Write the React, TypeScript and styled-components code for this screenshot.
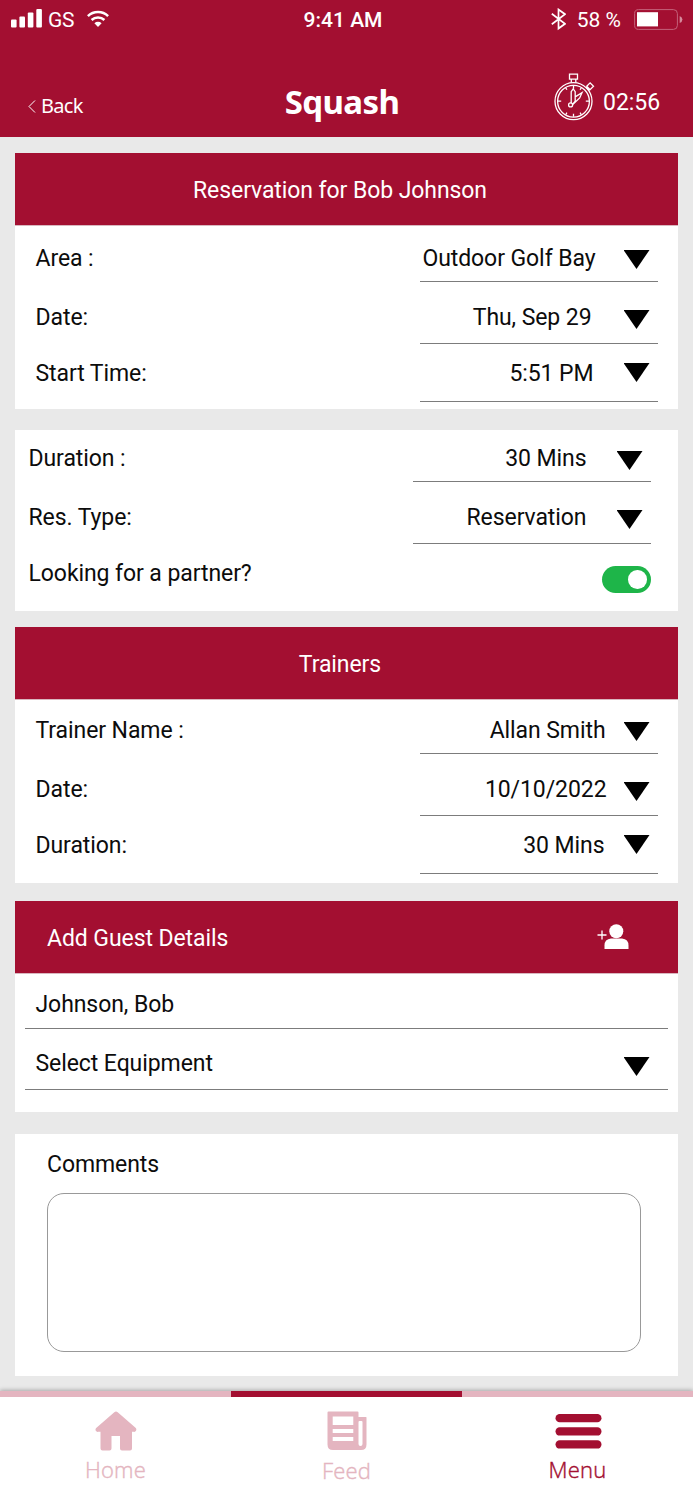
import React from "react";
import styled, { createGlobalStyle } from "styled-components";

const crimson = "#a30f31";
const blush = "#e4b5c0";

const GlobalStyle = createGlobalStyle`
  * { box-sizing: border-box; }
  body { margin: 0; background: #e9e9e9; }
`;

const Screen = styled.div`
  width: 693px;
  height: 1500px;
  display: flex;
  flex-direction: column;
  background: #e9e9e9;
  color: #0c0c0c;
  font-family: Roboto, "Liberation Sans", sans-serif;
  font-size: 23px;
  letter-spacing: -0.08px;
  line-height: 28px;
  white-space: nowrap;
  overflow: hidden;
`;

const Header = styled.header`
  height: 137px;
  flex: none;
  background: ${crimson};
  color: #fff;
`;

const StatusBar = styled.div`
  height: 40px;
  display: grid;
  grid-template-columns: 1fr auto 1fr;
  align-items: center;
  padding: 0 10px 1px 11px;
  font-size: 20px;
  svg { display: block; flex: none; }
`;

const StatusGroup = styled.div<{ $end?: boolean }>`
  display: flex;
  align-items: center;
  justify-content: ${(p) => (p.$end ? "flex-end" : "flex-start")};
`;

const Clock = styled.span`
  margin-right: 8px;
  font-weight: 500;
  font-size: 21px;
  letter-spacing: 0;
`;

const Carrier = styled.span`
  margin: 0 13px 0 6px;
  font-size: 21px;
  letter-spacing: -0.3px;
`;

const Percent = styled.span`
  margin: 0 13px 0 11px;
  font-size: 21px;
  letter-spacing: 0;
`;

const TitleBar = styled.div`
  height: 97px;
  display: grid;
  grid-template-columns: 1fr auto 1fr;
  align-items: start;
  padding: 32px 33px 0 28px;
`;

const BackButton = styled.div`
  display: flex;
  align-items: center;
  gap: 5px;
  padding-top: 20px;
  font: 20px/28px "Noto Sans", "Open Sans", sans-serif;
  letter-spacing: -0.7px;
`;

const Title = styled.h1`
  margin: 0 4px 0 0;
  padding-top: 8px;
  font: 700 33px/44px "Noto Sans", "Open Sans", sans-serif;
  letter-spacing: -0.6px;
`;

const Timer = styled.div`
  display: flex;
  justify-content: flex-end;
  gap: 8px;
  line-height: 62px;
`;

const Content = styled.main`
  flex: 1;
  padding: 16px 15px 0;
`;

const Card = styled.section<{ $height: number; $gap: number; $inset: number }>`
  height: ${(p) => p.$height}px;
  margin-bottom: ${(p) => p.$gap}px;
  background: #fff;
  --inset: ${(p) => p.$inset}px;
`;

const CardHeader = styled.div<{ $split?: boolean }>`
  height: 73px;
  display: flex;
  align-items: center;
  justify-content: ${(p) => (p.$split ? "space-between" : "center")};
  padding: ${(p) => (p.$split ? "3px 49px 0 32px" : "4px 13px 0 0")};
  background: ${crimson};
  color: #fff;
  border-bottom: 1px solid #d9b7bf;
`;

const Row = styled.div<{ $height: number; $top: number }>`
  height: ${(p) => p.$height}px;
  display: flex;
  justify-content: space-between;
  padding: 0 calc(41px - var(--inset)) 0 calc(var(--inset) - 0.5px);
  > span { padding-top: ${(p) => p.$top}px; }
`;

const Field = styled.div<{ $top: number; $end: number }>`
  width: 238px;
  flex: none;
  display: flex;
  justify-content: flex-end;
  padding-right: 8.5px;
  border-bottom: 1.4px solid #7c7c7c;
  > span { padding-top: ${(p) => p.$top}px; margin-right: ${(p) => p.$end}px; }
`;

const Arrow = styled.i<{ $top: number }>`
  flex: none;
  width: 26px;
  height: 19px;
  margin-top: ${(p) => p.$top}px;
  background: #000;
  clip-path: polygon(0 0, 100% 0, 50% 100%);
`;

const Switch = styled.div`
  width: 49px;
  height: 27px;
  margin-top: 22px;
  padding: 4px 4.5px;
  display: flex;
  justify-content: flex-end;
  border-radius: 14px;
  background: #1eb549;
  &::after { content: ""; width: 18.5px; height: 18.5px; border-radius: 50%; background: #fff; }
`;

const LineRow = styled.div<{ $height: number; $top: number }>`
  height: ${(p) => p.$height}px;
  margin: 0 10px;
  padding: 0 18.5px 0 10.5px;
  display: flex;
  justify-content: space-between;
  border-bottom: 1.4px solid #7c7c7c;
  > span { padding-top: ${(p) => p.$top}px; }
`;

const Comments = styled.div`
  padding: 17px 37px 0 32px;
`;

const CommentBox = styled.div`
  height: 159px;
  margin-top: 14px;
  border: 1px solid #999;
  border-radius: 17px;
`;

const TabBar = styled.nav`
  height: 109px;
  flex: none;
  display: grid;
  grid-template-columns: repeat(3, 1fr);
  background: #fff;
  box-shadow: 0 -1px 4px rgba(0, 0, 0, 0.28);
`;

const Tab = styled.div<{ $current?: boolean; $marked?: boolean; $drop?: number }>`
  display: flex;
  flex-direction: column;
  align-items: center;
  border-top: 6px solid ${(p) => (p.$marked ? crimson : blush)};
  color: ${(p) => (p.$current ? crimson : blush)};
  font: 300 22px/30px "Open Sans", "Noto Sans", sans-serif;
  letter-spacing: 0.2px;
  -webkit-text-stroke: 0.4px currentColor;
  svg { display: block; margin: 14px 0 0 1px; }
  span { margin-top: ${(p) => 2 + (p.$drop ?? 0)}px; }
`;

interface SelectRowProps {
  label: string;
  value: string;
  height: number;
  top: number;
  arrow: number;
  end: number;
}

const SelectRow = ({ label, value, height, top, arrow, end }: SelectRowProps) => (
  <Row $height={height} $top={top}>
    <span>{label}</span>
    <Field $top={top} $end={end}>
      <span>{value}</span>
      <Arrow $top={arrow} />
    </Field>
  </Row>
);

const Stopwatch = () => (
  <svg width="41" height="50" viewBox="0 -0.2 41 50" fill="none" stroke="#fff" strokeWidth="1.3">
    <circle cx="19.500" cy="29" r="18.500" />
    <circle cx="19.500" cy="29" r="15.900" />
    <path d="M15.500 2h8v5h-8zM17.300 7v3.600M21.800 7v3.600" />
    <path d="M32.700 14.100l3.400-3.400 3.400 3.400-3.400 3.400zM32 15l3.400 3.400" />
    <path d="M19.500 13.500v3M19.500 41.500v3M4 29h3.200M31.800 29H35M11.700 15.500l1.200 2.100M27.300 15.500l-1.200 2.100M11.700 42.500l1.200-2.100M27.300 42.500l-1.200-2.100" />
    <path d="M17.200 31.300V19.500l2-2.800 2 2.800v9.500l-2.700 3.300M21.200 24.700l6.800-4.200-2.300 5.200-7 6.500" />
    <circle cx="16.600" cy="32.700" r="2" />
  </svg>
);

export default function App() {
  return (
    <>
      <GlobalStyle />
      <Screen>
        <Header>
          <StatusBar>
            <StatusGroup>
              <svg width="31" height="21" fill="#fff">
                <rect x="0" y="10.500" width="5.600" height="8" rx="1" />
                <rect x="8.400" y="7.500" width="5.600" height="11" rx="1" />
                <rect x="16.800" y="3.500" width="5.600" height="15" rx="1" />
                <rect x="25.300" y="0" width="5.600" height="18.500" rx="1" />
              </svg>
              <Carrier>GS</Carrier>
              <svg width="22" height="19" viewBox="0 0 22 19" fill="none" stroke="#fff" strokeWidth="2.500">
                <path d="M0.900 6.200a14.400 14.400 0 0 1 20.200 0M4.600 10a9.200 9.200 0 0 1 12.800 0" />
                <path d="M7.400 13.200a5.100 5.100 0 0 1 7.200 0L11 17z" fill="#fff" stroke="none" />
              </svg>
            </StatusGroup>
            <Clock>9:41 AM</Clock>
            <StatusGroup $end>
              <svg width="15" height="23" viewBox="0 0 15 23" fill="none" stroke="#fff" strokeWidth="1.700">
                <path d="M0.800 5.800L14 15.800 7.500 20.500v-19L14 6.200 0.800 16.200" />
              </svg>
              <Percent>58 %</Percent>
              <svg width="49" height="21" viewBox="0 0 49 21">
                <rect x="0.600" y="0.600" width="42.800" height="19.800" rx="4" fill="none" stroke="#c4627a" />
                <rect x="3" y="3.200" width="21" height="14.200" fill="#fff" />
                <path d="M45.700 7v7q2.700-1 2.700-3.500T45.700 7z" fill="#d58b9c" />
              </svg>
            </StatusGroup>
          </StatusBar>
          <TitleBar>
            <BackButton>
              <svg width="8" height="13" viewBox="0 0 8 13" fill="none" stroke="#fff">
                <path d="M7 0.500l-6 6 6 6" />
              </svg>
              Back
            </BackButton>
            <Title>Squash</Title>
            <Timer>
              <Stopwatch />
              <span>02:56</span>
            </Timer>
          </TitleBar>
        </Header>
        <Content>
          <Card $height={256} $gap={21} $inset={21}>
            <CardHeader>Reservation for Bob Johnson</CardHeader>
            <SelectRow label="Area :" value="Outdoor Golf Bay" height={56} top={19} arrow={24} end={28} />
            <SelectRow label="Date:" value="Thu, Sep 29" height={62} top={22} arrow={28} end={32} />
            <SelectRow label="Start Time:" value="5:51 PM" height={58} top={16} arrow={19} end={30} />
          </Card>
          <Card $height={181} $gap={16} $inset={14}>
            <SelectRow label="Duration :" value="30 Mins" height={52} top={15} arrow={21} end={30} />
            <SelectRow label="Res. Type:" value="Reservation" height={62} top={22} arrow={28} end={30} />
            <Row $height={66} $top={16}>
              <span>Looking for a partner?</span>
              <Switch />
            </Row>
          </Card>
          <Card $height={256} $gap={18} $inset={21}>
            <CardHeader>Trainers</CardHeader>
            <SelectRow label="Trainer Name :" value="Allan Smith" height={54} top={17} arrow={22} end={18} />
            <SelectRow label="Date:" value="10/10/2022" height={62} top={22} arrow={28} end={17} />
            <SelectRow label="Duration:" value="30 Mins" height={58} top={16} arrow={19} end={19} />
          </Card>
          <Card $height={211} $gap={22} $inset={21}>
            <CardHeader $split>
              Add Guest Details
              <svg width="32" height="29" viewBox="0 0 32 29" fill="#fff">
                <path d="M0.500 11h9M5 6.500v9" stroke="#fff" strokeWidth="1.300" />
                <circle cx="19.300" cy="7.300" r="7" />
                <path d="M7.500 25v-3.500q0-6.500 6.500-7h11q6.500.5 6.500 7V25z" />
              </svg>
            </CardHeader>
            <LineRow $height={55} $top={17}>
              <span>Johnson, Bob</span>
            </LineRow>
            <LineRow $height={61} $top={21}>
              <span>Select Equipment</span>
              <Arrow $top={28} />
            </LineRow>
          </Card>
          <Card $height={242} $gap={0} $inset={32}>
            <Comments>
              Comments
              <CommentBox />
            </Comments>
          </Card>
        </Content>
        <TabBar>
          <Tab>
            <svg width="42" height="41" viewBox="0 0 42 41" fill={blush}>
              <path d="M19.3 1.2q1.7-1.5 3.4 0L40.8 17q1 1.4.2 2.8-.8 1.4-2.5 1H37v16.7q0 2-2 2h-8q-2 0-2-2V25h-8.500v12.500q0 2-2 2H7.500q-2 0-2-2V20.800H3.300q-1.700.4-2.500-1-.8-1.400.4-2.800z" />
            </svg>
            <span>Home</span>
          </Tab>
          <Tab $marked $drop={2}>
            <svg width="40" height="40" viewBox="0 0 40 40">
              <path fillRule="evenodd" fill={blush} d="M1.500.5h29q1 0 1 1V6H39q.5 0 .5.500v27q0 5.500-5.500 5.500H6q-5.500 0-5.500-5.500V1.500q0-1 1-1zM5.700 5.500v8.500h20.600V5.500zM5.700 18v4h20.600v-4zM5.700 26v4h20.600v-4zM31.500 11v22q0 2 2 2t2-2V11q0-1-1-1h-2q-1 0-1 1z" />
            </svg>
            <span>Feed</span>
          </Tab>
          <Tab $current>
            <svg width="47" height="41" viewBox="0 0 47 41" fill={crimson}>
              <rect x="0.500" y="3" width="46" height="8.300" rx="4.150" />
              <rect x="0.500" y="16.300" width="46" height="8.300" rx="4.150" />
              <rect x="0.500" y="29.300" width="46" height="8.300" rx="4.150" />
            </svg>
            <span>Menu</span>
          </Tab>
        </TabBar>
      </Screen>
    </>
  );
}
